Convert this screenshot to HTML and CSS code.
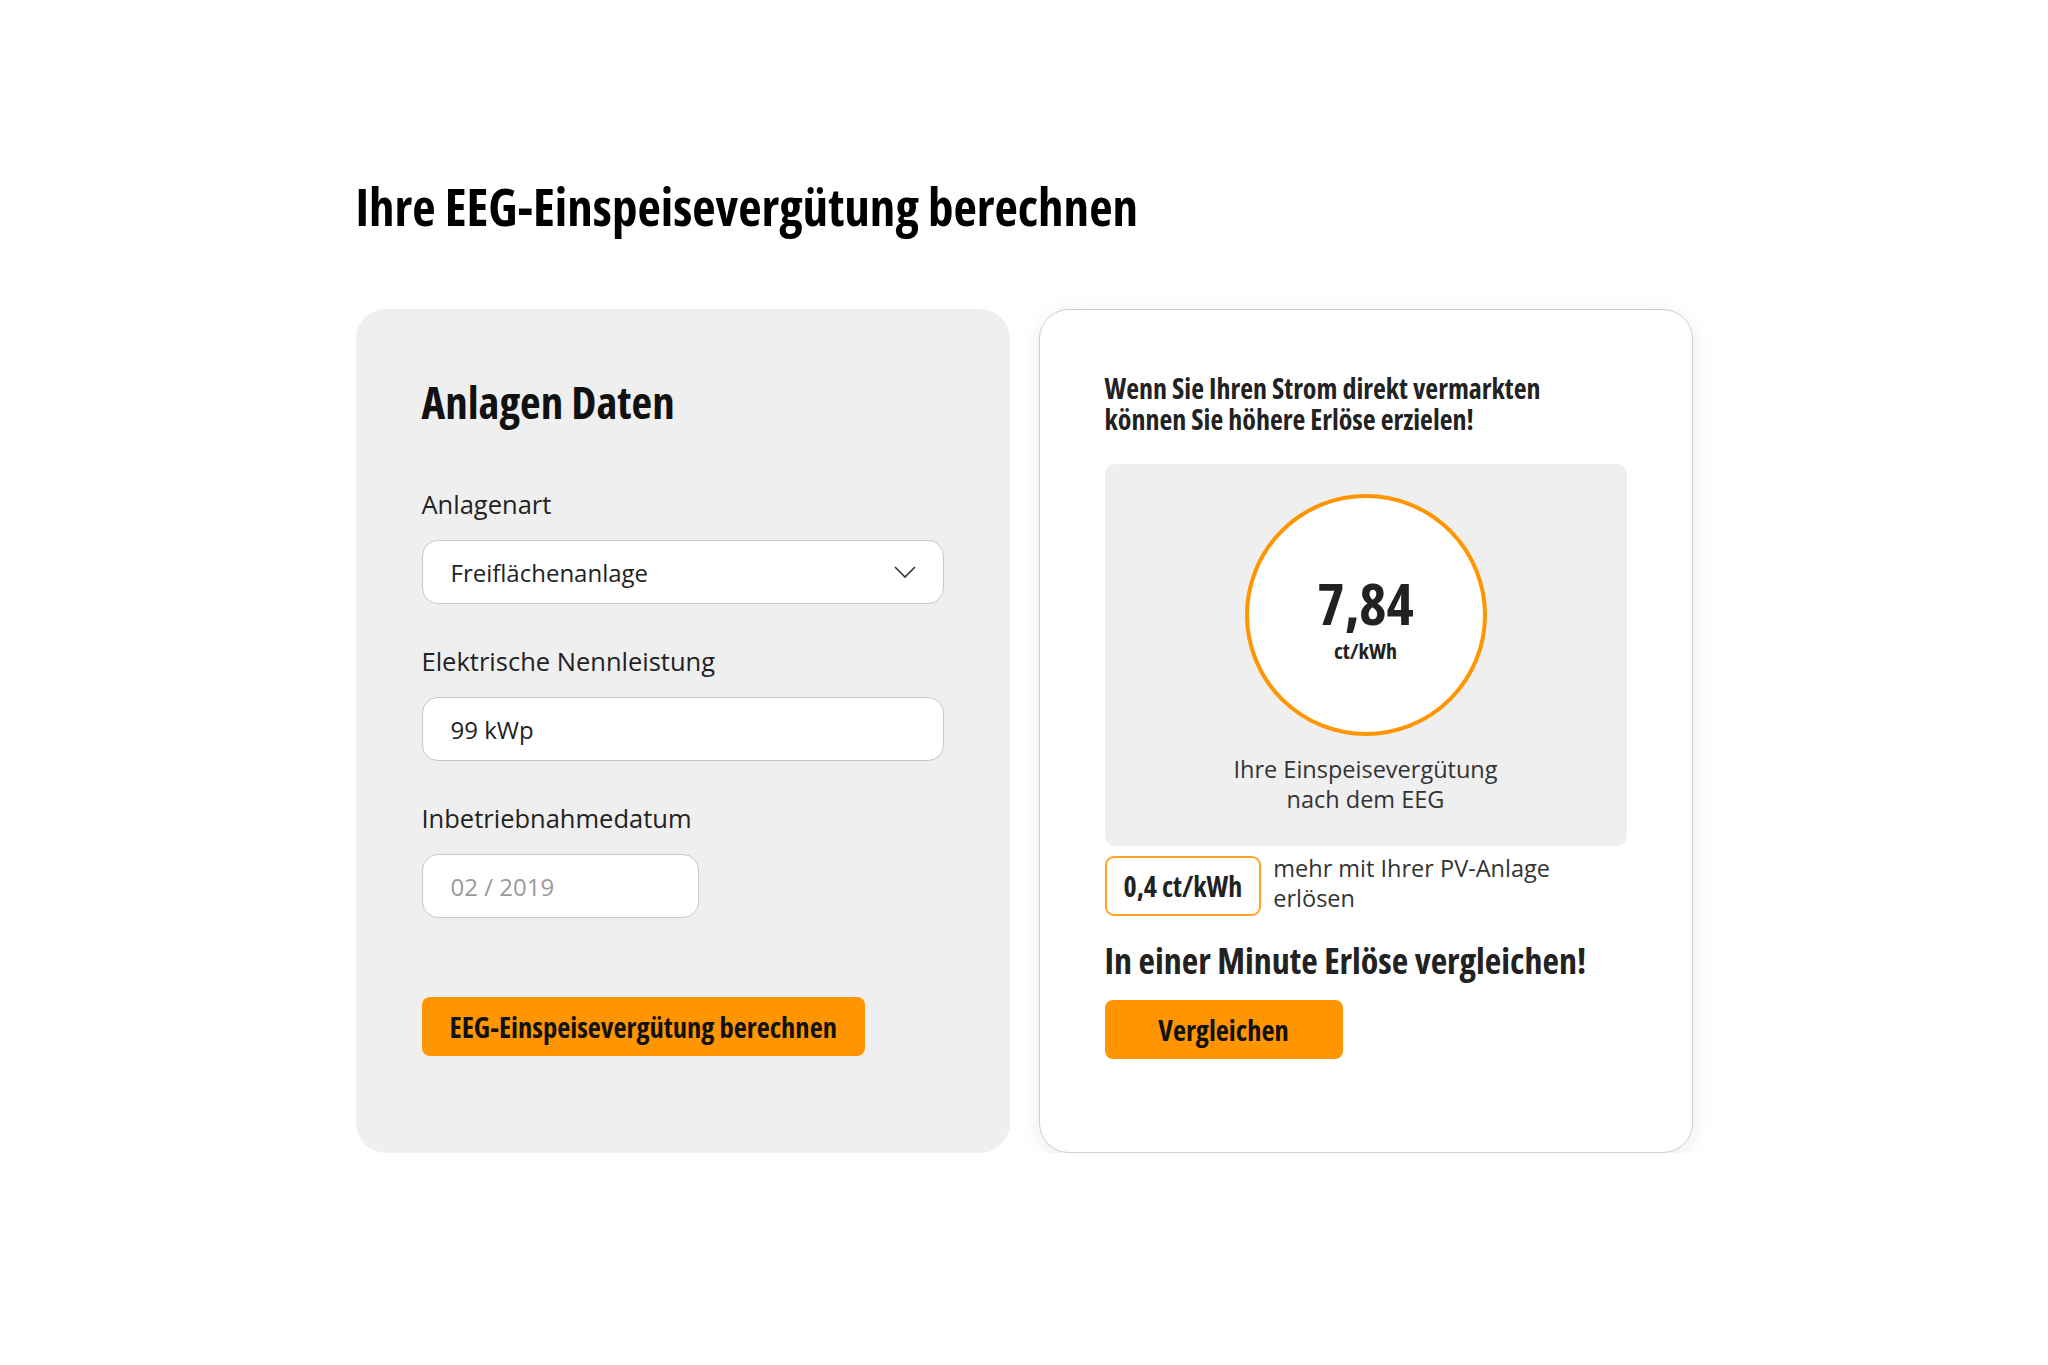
FILE: index.html
```html
<!DOCTYPE html>
<html lang="de">
<head>
    <meta charset="UTF-8">
    <meta name="viewport" content="width=device-width, initial-scale=1.0">
    <title>EEG-Einspeisevergütung berechnen</title>
    <link rel="stylesheet" href="styles.css">
</head>
<body>
    <div class="page">
        <h1 class="page-title">Ihre EEG-Einspeisevergütung berechnen</h1>

        <div class="cards">
            <!-- Eingabe -->
            <form class="card card-form">
                <h2 class="card-title">Anlagen Daten</h2>

                <label class="field-label" for="anlagenart">Anlagenart</label>
                <div class="select-wrap">
                    <select class="field" id="anlagenart">
                        <option>Freiflächenanlage</option>
                        <option>Dachanlage</option>
                    </select>
                    <svg class="select-arrow" width="22" height="12" viewBox="0 0 22 12">
                        <polyline points="1,1 11,11 21,1" fill="none" stroke="#333" stroke-width="1.6"/>
                    </svg>
                </div>

                <label class="field-label" for="leistung">Elektrische Nennleistung</label>
                <input class="field" id="leistung" type="text" value="99 kWp">

                <label class="field-label" for="datum">Inbetriebnahmedatum</label>
                <input class="field field-short" id="datum" type="text" placeholder="02 / 2019">

                <button class="button" type="button">EEG-Einspeisevergütung berechnen</button>
            </form>

            <!-- Ergebnis -->
            <div class="card card-result">
                <p class="result-intro">Wenn Sie Ihren Strom direkt vermarkten<br>können Sie höhere Erlöse erzielen!</p>

                <div class="result-box">
                    <div class="result-circle">
                        <span class="result-value">7,84</span>
                        <span class="result-unit">ct/kWh</span>
                    </div>
                    <p class="result-caption">Ihre Einspeisevergütung<br>nach dem EEG</p>
                </div>

                <div class="bonus">
                    <span class="bonus-badge">0,4 ct/kWh</span>
                    <span class="bonus-text">mehr mit Ihrer PV-Anlage<br>erlösen</span>
                </div>

                <h3 class="compare-title">In einer Minute Erlöse vergleichen!</h3>
                <button class="button button-compare" type="button">Vergleichen</button>
            </div>
        </div>
    </div>
</body>
</html>
```

FILE: styles.css
```css
body {
    margin: 0;
    background-color: #fff;
    color: #222;
    font-family: "Open Sans", sans-serif;
}

/* fette Schriften etwas schmaler */
.page-title,
.card-title,
.result-intro,
.result-value,
.result-unit,
.bonus-badge,
.compare-title,
.button {
    font-stretch: 75%;
    font-weight: 700;
}

.page {
    width: 1337px;
    margin: 0 auto;
    padding-top: 176px;
}

.page-title {
    margin: 0 0 73px;
    font-size: 51px;
    line-height: 60px;
    color: #000;
}

.cards {
    display: grid;
    grid-template-columns: 1fr 1fr;
    gap: 29px;
}

.card {
    display: flex;
    flex-direction: column;
    align-items: flex-start;
    border-radius: 30px;
    padding: 63px 65px 93px;
    box-sizing: border-box;
    margin: 0;
}

.card-form {
    background-color: #efefef;
    padding-top: 67px;
    padding-left: 66px;
    padding-right: 66px;
}

.card-result {
    background-color: #fff;
    border: 1px solid #cfcfcf;
    box-shadow: 0 4px 22px rgba(0, 0, 0, 0.08);
}

.card-title {
    margin: 0 0 58px;
    font-size: 45px;
    line-height: 52px;
    color: #111;
}

.field-label {
    display: block;
    font-size: 25.5px;
    line-height: 36px;
    color: #222;
    margin-bottom: 18px;
}

.field {
    display: block;
    width: 100%;
    height: 64px;
    box-sizing: border-box;
    padding: 0 28px;
    border: 1.5px solid #c8c8c8;
    border-radius: 16px;
    background-color: #fff;
    font: inherit;
    font-size: 24px;
    color: #222;
    margin-bottom: 39px;
    outline: none;
}

.field::placeholder {
    color: #9a9a9a;
}

.field-short {
    width: 277px;
    margin-bottom: 79px;
}

.select-wrap {
    position: relative;
    align-self: stretch;
}

.select-wrap select {
    appearance: none;
    -webkit-appearance: none;
}

.select-arrow {
    position: absolute;
    right: 28px;
    top: 26px;
    pointer-events: none;
}

.button {
    height: 59px;
    border: none;
    border-radius: 8px;
    background-color: #ff9500;
    color: #111;
    font-family: inherit;
    font-size: 28.5px;
    padding: 0 28px;
    cursor: pointer;
}

.button-compare {
    width: 238px;
    padding: 0;
}

.result-intro {
    margin: 0 0 29px;
    font-size: 28px;
    line-height: 31px;
    color: #222;
}

.result-box {
    align-self: stretch;
    display: flex;
    flex-direction: column;
    align-items: center;
    background-color: #efefef;
    border-radius: 10px;
    padding: 30px 0 32px;
}

.result-circle {
    width: 242px;
    height: 242px;
    box-sizing: border-box;
    padding-top: 3px;
    border: 4px solid #ff9500;
    border-radius: 50%;
    background-color: #fff;
    display: flex;
    flex-direction: column;
    align-items: center;
    justify-content: center;
    color: #222;
}

.result-value {
    font-size: 58px;
    line-height: 64px;
}

.result-unit {
    margin-top: 2px;
    font-size: 22px;
    line-height: 26px;
}

.result-caption {
    margin: 18px 0 0;
    text-align: center;
    font-size: 23.5px;
    line-height: 30px;
    color: #333;
}

.bonus {
    display: flex;
    align-items: flex-start;
    gap: 12px;
    margin-top: 10px;
}

.bonus-badge {
    display: flex;
    align-items: center;
    height: 60px;
    box-sizing: border-box;
    padding: 0 17px;
    border: 2px solid #ffa226;
    border-radius: 9px;
    font-size: 28px;
    color: #222;
}

.bonus-text {
    font-size: 23.5px;
    line-height: 30px;
    color: #333;
    margin-top: -3px;
}

.compare-title {
    margin: 23px 0 17px;
    font-size: 36px;
    line-height: 44px;
    color: #222;
}
```
